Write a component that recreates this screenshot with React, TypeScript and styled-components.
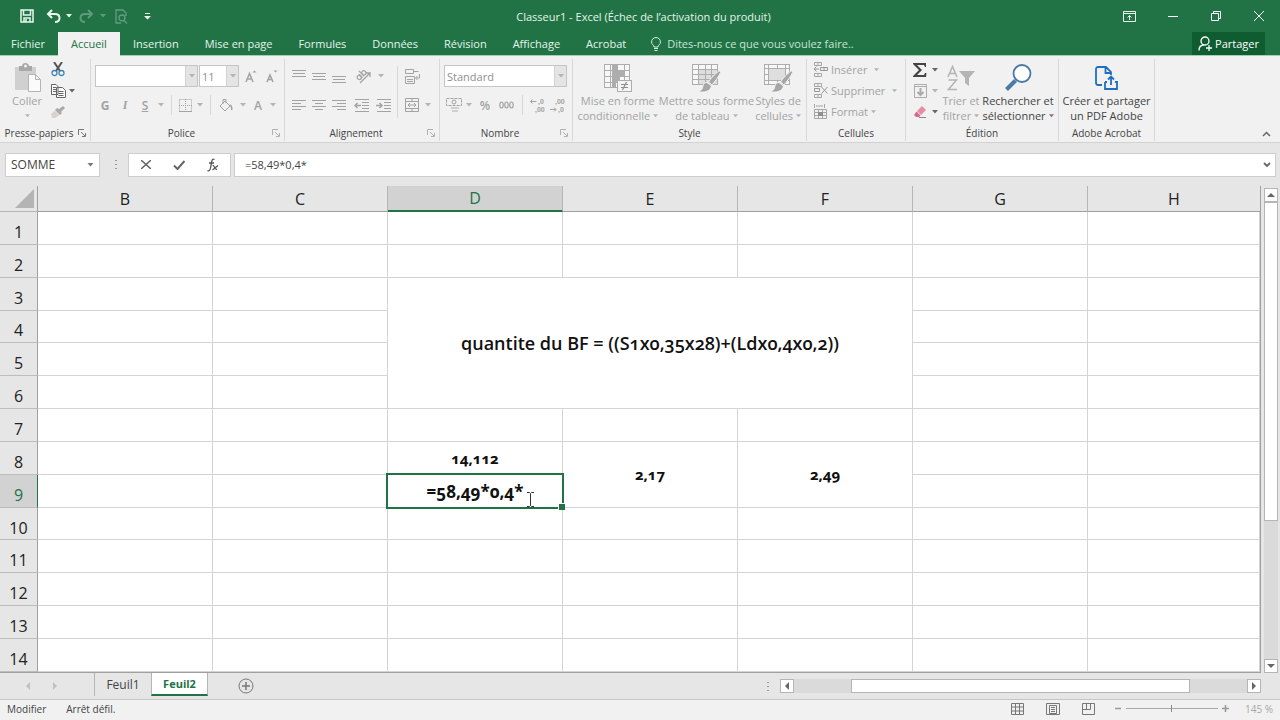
import React from 'react';
import styled, { createGlobalStyle, css } from 'styled-components';

const GREEN = '#217346';
const GREY = '#a3a3a3';
const INK = '#444444';

const GlobalStyle = createGlobalStyle`
  * { box-sizing: border-box; }
  body { margin: 0; }
  body, button, input, select { font-family: "Open Sans", "Noto Sans", sans-serif; }
  button { margin: 0; padding: 0; border: 0; background: none; color: inherit; font-size: 11px; }
  svg { display: block; flex: none; }
`;

const Window = styled.div`
  display: flex;
  flex-direction: column;
  height: 100vh;
  overflow: hidden;
  background: #e6e6e6;
  color: ${INK};
`;

/* ---------- title bar ---------- */

const TitleBar = styled.header`
  display: grid;
  grid-template-columns: 1fr auto 1fr;
  align-items: center;
  height: 32px;
  padding: 0 6px 0 13px;
  background: ${GREEN};
  color: #e4f3ea;
`;

const QuickAccess = styled.div`
  display: flex;
  align-items: center;
`;

const TitleButton = styled.button<{ $w: number; $faded?: boolean }>`
  display: flex;
  align-items: center;
  justify-content: center;
  width: ${p => p.$w}px;
  height: 24px;
  opacity: ${p => (p.$faded ? 0.3 : 1)};
`;

const Title = styled.h1`
  margin: 0;
  font-size: 11px;
  font-weight: 400;
`;

const WindowButtons = styled(QuickAccess)`
  justify-content: flex-end;
  gap: 31px;
  padding-right: 9px;
`;

/* ---------- ribbon tabs ---------- */

const TabRow = styled.nav`
  display: flex;
  align-items: stretch;
  height: 24px;
  padding-right: 15px;
  background: ${GREEN};
  border-bottom: 1px solid #9fd0b4;
`;

const RibbonTab = styled.button<{ $active?: boolean }>`
  padding: 0 13px;
  white-space: nowrap;
  color: #e4f3ea;
  &:first-child { padding-left: 11px; }
  ${p => p.$active && css`
    background: #f1f1f1;
    color: ${GREEN};
    margin-bottom: -1px;
    padding-bottom: 1px;
  `}
`;

const TellMe = styled.button`
  display: flex;
  align-items: center;
  gap: 6px;
  padding-left: 12px;
  color: #c5e5d2;
  white-space: nowrap;
`;

const ShareButton = styled.button`
  display: flex;
  align-items: center;
  gap: 3px;
  margin-left: auto;
  padding: 0 6px;
  background: #0e5c2f;
  color: #ffffff;
`;

/* ---------- ribbon ---------- */

const Ribbon = styled.section`
  display: flex;
  flex: none;
  height: 87px;
  padding: 3px 0 1px;
  background: #f1f1f1;
  border-bottom: 1px solid #d2d2d2;
`;

const GroupBox = styled.section<{ $w: number }>`
  display: flex;
  flex-direction: column;
  flex: none;
  width: ${p => p.$w}px;
  border-right: 1px solid #d8d8d8;
`;

const GroupBody = styled.div`
  display: flex;
  flex: 1;
  padding: 0 4px;
`;

const GroupFooter = styled.div`
  display: flex;
  align-items: center;
  height: 16px;
`;

const GroupName = styled.h2`
  flex: 1;
  margin: 0;
  font-size: 10px;
  font-weight: 400;
  text-align: center;
  white-space: nowrap;
`;

const LauncherButton = styled.button`
  width: 12px;
`;

const Stack = styled.div`
  display: flex;
  flex-direction: column;
  gap: 7px;
  padding-top: 6px;
`;

const TightStack = styled.div`
  display: grid;
  grid-auto-rows: 21px;
  align-content: start;
  align-items: center;
`;

const Row = styled.div`
  display: flex;
  align-items: center;
  height: 22px;
`;

const TightRow = styled(Row)`
  height: 21px;
`;

const Tool = styled.button<{ $w?: number }>`
  display: flex;
  align-items: center;
  justify-content: center;
  width: ${p => p.$w ?? 20}px;
  height: 20px;
  color: ${GREY};
  font-size: 12px;
`;

const Letter = styled.span<{ $kind: 'bold' | 'italic' | 'underline' | 'plain' }>`
  font-weight: ${p => (p.$kind === 'bold' ? 700 : 600)};
  font-style: ${p => (p.$kind === 'italic' ? 'italic' : 'normal')};
  font-family: ${p => (p.$kind === 'italic' ? '"Liberation Serif", serif' : 'inherit')};
  text-decoration: ${p => (p.$kind === 'underline' ? 'underline' : 'none')};
`;

const Divider = styled.span<{ $h?: number }>`
  align-self: center;
  width: 1px;
  height: ${p => p.$h ?? 20}px;
  margin: 0 4px;
  background: #d8d8d8;
`;

const Picker = styled.label<{ $w: number }>`
  display: flex;
  width: ${p => p.$w}px;
  height: 22px;
  border: 1px solid #c6c6c6;
  background: #ffffff;
  margin-right: 1px;
`;

const PickerSelect = styled.select`
  flex: 1;
  min-width: 0;
  padding: 0 2px;
  border: 0;
  background: none;
  appearance: none;
  color: #8f8f8f;
  opacity: 1;
  font-size: 11px;
`;

const PickerArrow = styled.span`
  display: flex;
  align-items: center;
  justify-content: center;
  width: 12px;
  background: #e4e4e4;
  border-left: 1px solid #d2d2d2;
`;

const BigTool = styled.button<{ $w: number; $enabled?: boolean }>`
  display: flex;
  flex-direction: column;
  align-items: center;
  width: ${p => p.$w}px;
  height: 65px;
  padding-top: 3px;
  color: ${p => (p.$enabled ? INK : GREY)};
  line-height: 15px;
  white-space: nowrap;
`;

const BigIcon = styled.span`
  display: flex;
  align-items: center;
  justify-content: center;
  height: 31px;
`;

const BigLine = styled.span`
  display: flex;
  align-items: center;
  gap: 3px;
  height: 15px;
`;

const TextTool = styled.button<{ $gap?: number }>`
  display: flex;
  align-items: center;
  gap: 3px;
  height: 21px;
  padding-left: 2px;
  color: ${GREY};
  white-space: nowrap;
  & > :last-child { margin-left: ${p => p.$gap ?? 0}px; }
`;

const CollapseButton = styled.button`
  align-self: flex-end;
  margin: 0 9px 4px auto;
`;

/* ---------- formula bar ---------- */

const FormulaBar = styled.section`
  display: flex;
  align-items: center;
  flex: none;
  height: 43px;
  padding: 0 4px 0 5px;
`;

const BarBox = styled.div<{ $w?: number }>`
  display: flex;
  align-items: center;
  ${p => (p.$w ? css`width: ${p.$w}px;` : css`flex: 1;`)}
  height: 24px;
  border: 1px solid #cdcdcd;
  background: #ffffff;
  margin-right: 3px;
  &:last-child { margin-right: 0; }
`;

const FormulaTools = styled(BarBox)`
  justify-content: space-around;
`;

const BarInput = styled.input<{ $pad: number; $size: number }>`
  flex: 1;
  min-width: 0;
  height: 20px;
  padding: 0 ${p => p.$pad}px;
  border: 0;
  outline: 0;
  background: none;
  color: ${INK};
  font-size: ${p => p.$size}px;
`;

const BarButton = styled.button<{ $w: number }>`
  display: flex;
  align-items: center;
  justify-content: center;
  width: ${p => p.$w}px;
  height: 20px;
`;

const Grip = styled.span`
  display: flex;
  flex-direction: column;
  align-items: center;
  justify-content: center;
  gap: 3px;
  width: 25px;
  & > i { width: 2px; height: 1px; background: #9a9a9a; }
`;

/* ---------- sheet ---------- */

const Workspace = styled.main`
  display: flex;
  flex: 1;
  min-height: 0;
`;

const Sheet = styled.div`
  flex: 1;
  min-width: 0;
  border-right: 1px solid #a0a0a0;
  border-bottom: 1px solid #a0a0a0;
`;

const Grid = styled.table`
  width: 100%;
  height: 100%;
  table-layout: fixed;
  border-collapse: separate;
  border-spacing: 0;
  background: #ffffff;
`;

const ColumnHead = styled.th<{ $selected?: boolean; $last?: boolean }>`
  height: 26px;
  padding: 0;
  font-size: 16px;
  line-height: 22px;
  font-weight: 400;
  color: ${p => (p.$selected ? GREEN : '#222222')};
  background: ${p => (p.$selected ? '#d2d2d2' : '#e6e6e6')};
  border-right: ${p => (p.$last ? 0 : 1)}px solid #b5b5b5;
  border-bottom: ${p => (p.$selected ? `2px solid ${GREEN}` : '1px solid #a0a0a0')};
`;

const Corner = styled.td`
  padding: 0;
  background: #e6e6e6;
  border-right: 1px solid #a0a0a0;
  border-bottom: 1px solid #b5b5b5;
  & > svg { margin: 0 3px 0 auto; }
`;

const RowHead = styled.th<{ $selected?: boolean }>`
  padding: 8px 0 0;
  font-size: 16px;
  line-height: 22px;
  font-weight: 400;
  color: ${p => (p.$selected ? GREEN : '#222222')};
  background: ${p => (p.$selected ? '#d2d2d2' : '#e6e6e6')};
  border-right: 1px solid ${p => (p.$selected ? GREEN : '#a0a0a0')};
  border-bottom: 1px solid #bdbdbd;
`;

const Cell = styled.td<{ $title?: boolean }>`
  position: relative;
  padding: 0;
  border-right: 1px solid #d4d4d4;
  border-bottom: 1px solid #d4d4d4;
  font-size: ${p => (p.$title ? 18 : 15)}px;
  line-height: 22px;
  font-weight: ${p => (p.$title ? 600 : 700)};
  font-variant-numeric: oldstyle-nums;
  text-align: center;
  color: #111111;
`;

const CellInput = styled.input`
  display: block;
  width: 100%;
  height: 26px;
  padding: 2px 0 0;
  border: 0;
  outline: 0;
  background: none;
  font-size: 17px;
  font-weight: 700;
  font-variant-numeric: oldstyle-nums;
  text-align: center;
  color: #111111;
`;

const Selection = styled.div`
  position: absolute;
  inset: -2px;
  border: 2px solid ${GREEN};
  pointer-events: none;
  z-index: 1;
  &::after {
    content: '';
    position: absolute;
    right: -3px;
    bottom: -3px;
    width: 6px;
    height: 6px;
    background: ${GREEN};
    border: solid #ffffff;
    border-width: 1px 0 0 1px;
  }
`;

const Pointer = styled.svg`
  position: absolute;
  left: 138px;
  top: 16px;
  z-index: 2;
`;

/* ---------- scroll bars ---------- */

const VerticalBar = styled.div`
  display: flex;
  flex-direction: column;
  width: 19px;
  padding: 2px 2px 0 3px;
`;

const ArrowButton = styled.button`
  display: flex;
  align-items: center;
  justify-content: center;
  width: 14px;
  height: 14px;
  flex: none;
  background: #ffffff;
  border: 1px solid #b5b5b5;
`;

const Track = styled.div<{ $dir: 'row' | 'column' }>`
  display: flex;
  flex: 1;
  flex-direction: ${p => p.$dir};
  background: #dadada;
`;

const Thumb = styled.div<{ $grow: number }>`
  flex: ${p => p.$grow};
  background: #ffffff;
  border: 1px solid #b5b5b5;
`;

const Space = styled.div<{ $grow: number }>`
  flex: ${p => p.$grow};
`;

/* ---------- sheet tabs and status ---------- */

const SheetBar = styled.section`
  display: flex;
  align-items: center;
  flex: none;
  height: 26px;
`;

const SheetNav = styled.div`
  display: flex;
  justify-content: space-around;
  width: 94px;
  padding: 0 26px 0 14px;
`;

const SheetTab = styled.button<{ $active?: boolean; $w: number }>`
  width: ${p => p.$w}px;
  height: 23px;
  align-self: flex-start;
  font-size: 12px;
  white-space: nowrap;
  border-left: 1px solid #b5b5b5;
  ${p => p.$active && css`
    background: #ffffff;
    color: ${GREEN};
    font-size: 11px;
    font-weight: 700;
    border-bottom: 2px solid ${GREEN};
    border-right: 1px solid #b5b5b5;
  `}
`;

const AddSheet = styled.button`
  margin-left: 30px;
`;

const HorizontalBar = styled.div`
  display: flex;
  flex: none;
  width: 41%;
  margin-left: auto;
  padding-right: 19px;
`;

const StatusBar = styled.footer`
  display: flex;
  align-items: center;
  flex: none;
  height: 21px;
  padding: 0 7px 3px;
  gap: 20px;
  font-size: 10px;
  background: #f1f1f1;
  border-top: 1px solid #c6c6c6;
`;

const ViewButtons = styled.div`
  display: flex;
  gap: 22px;
  margin-left: auto;
`;

const ZoomSlider = styled.div`
  display: flex;
  align-items: center;
  gap: 4px;
`;

const ZoomRange = styled.input`
  width: 92px;
  height: 9px;
  margin: 0;
  appearance: none;
  background: linear-gradient(#a8a8a8, #a8a8a8) center / 100% 1px no-repeat;
  &::-webkit-slider-thumb {
    appearance: none;
    width: 1px;
    height: 7px;
    background: #8a8a8a;
  }
`;

const ZoomValue = styled.output`
  margin-left: -4px;
  color: #a8a8a8;
`;

/* ---------- drawings ---------- */

const Caret = ({ c = '#b4b4b4', s = 6 }: { c?: string; s?: number }) => (
  <svg width={s} height="4" viewBox="0 0 6 4"><path d="M0 0h6L3 3.5z" fill={c} /></svg>
);

const Drop = ({ w = 12, c, label }: { w?: number; c?: string; label: string }) => (
  <Tool $w={w} aria-label={label}><Caret c={c} /></Tool>
);

const Lines = ({ xs, y0 = 2, step = 3, h = 14 }: { xs: [number, number][]; y0?: number; step?: number; h?: number }) => (
  <svg width="14" height={h} viewBox={`0 0 14 ${h}`} stroke="#a3a3a3">
    {xs.map(([a, b], i) => <path key={i} d={`M${a} ${y0 + i * step + 0.5}H${b}`} />)}
  </svg>
);

const Indent = ({ right }: { right?: boolean }) => (
  <svg width="16" height="14" viewBox="0 0 16 14" stroke="#a3a3a3" fill="none">
    <path d="M1 1.5h14M8 4.5h7M8 7.5h7M8 10.5h7M1 13.5h14" />
    <path strokeWidth="1.5" d={right ? 'M0 7.5h6M3.5 5l2.5 2.500L3.500 10' : 'M7 7.500H1M3.500 5L1 7.500 3.500 10'} />
  </svg>
);

const Launcher = ({ c = '#b0b0b0' }: { c?: string }) => (
  <svg width="8" height="8" viewBox="0 0 8 8" fill="none" stroke={c}>
    <path d="M.5 6V.5H6M3 3l4 4M7.500 4v3.500H4" />
  </svg>
);

const TableIcon = ({ kind }: { kind: 'rules' | 'table' | 'cell' }) => (
  <svg width="30" height="30" viewBox="0 0 30 30" fill="none" stroke="#adadad">
    <rect x="1.500" y="1.500" width="25" height={kind === 'rules' ? 23 : 20} fill="#f7f7f7" />
    {kind === 'rules' && <>
      <path d="M1 7.500h26M1 13.500h26M1 19.500h26M7.500 1v24M21.500 1v24" />
      <path fill="#adadad" stroke="none" d="M9 2h6v5H9zM9 8h12v5H9zM9 14h8v5H9zM9 20h4v5H9z" />
      <rect x="14.500" y="17.500" width="14" height="11" fill="#f4f4f4" />
      <path strokeWidth="1.200" stroke="#8f8f8f" d="M18 21.500h7M18 24.500h7M23.500 19l-4 8" />
    </>}
    {kind === 'table' && <>
      <path fill="#dedede" stroke="none" d="M8 7h18v14H8z" />
      <path d="M1 6.500h26M1 11.500h26M1 16.500h26M7.500 1v21M14.500 1v21M20.500 1v21" />
    </>}
    {kind === 'cell' && <>
      <path d="M1 5.500h26M1 17.500h26M5.500 1v21M22.500 1v21M14.500 1v4M14.500 18v4M1 11.500h4" />
      <path fill="#dedede" stroke="none" d="M6 6h16v11H6z" />
    </>}
    {kind !== 'rules' && <>
      <path fill="#a6a6a6" stroke="#f1f1f1" d="M28.500 7.500c-4 3-9 8-11 11.500l3.500 3C24 18.500 28 13 29.500 9.500z" />
      <path fill="#a6a6a6" stroke="#f1f1f1" d="M16 19.500c-3.500 0-4 3-4.500 5.500-.5 2-2.500 3-4.500 3.500 6 1.500 12.500 0 13.500-5.500z" />
    </>}
  </svg>
);

const MiniCells = ({ kind }: { kind: 'insert' | 'delete' | 'format' }) => (
  <svg width="15" height="15" viewBox="0 0 15 15" fill="none" stroke="#a6a6a6">
    {kind === 'format' ? <>
      <path d="M1.500 0v4M11.500 0v4M3 2h7M1.500 5.500h12v9h-12zM1 8.500h13M1 11.500h13M5.500 5v9M9.500 5v9" />
      <path fill="#8f8f8f" stroke="none" d="M5 8h5v4H5z" />
    </> : <>
      <path d="M1.500.5h7v3h-7zM5 .5v3M1.500 11.500h7v3h-7zM5 11.500v3" />
      {kind === 'insert'
        ? <path d="M7.500 5.500h7v3h-7zM11 5.500v3M6 7H1M3.500 4.500L1 7l2.500 2.500" stroke="#969696" />
        : <path d="M1.500 5.500h5v3h-5zM8.500 4l6 6.500M14.500 4l-6 6.500" stroke="#969696" />}
    </>}
  </svg>
);

const DecimalIcon = ({ more }: { more?: boolean }) => (
  <svg width="17" height="17" viewBox="0 0 17 17" fontFamily="Liberation Sans" fontSize="7" fontWeight="700" fill="#a3a3a3">
    <text x={more ? 9 : 6} y="7">{more ? ',0' : ',00'}</text>
    <text x={more ? 6 : 9} y="15">{more ? ',00' : ',0'}</text>
    <path fill="none" stroke="#a3a3a3" d={more ? 'M7.500 4.500H1.500M3.500 2.500l-2 2 2 2' : 'M1 12.500h6M5 10.500l2 2-2 2'} />
  </svg>
);

const Undo = () => (
  <svg width="15" height="14" viewBox="0 0 15 14" fill="none" stroke="#e9f6ee" strokeWidth="2">
    <path d="M2 5h7c3 0 4.500 1.800 4.500 4S12 13 9 13M6 1L2 5l4 4" />
  </svg>
);

const Redo = () => (
  <svg width="15" height="14" viewBox="0 0 15 14" fill="none" stroke="#e9f6ee" strokeWidth="2">
    <path d="M13 5H6C3 5 1.500 6.800 1.500 9S3 13 6 13M9 1l4 4-4 4" />
  </svg>
);

const Tri = ({ d, c = '#666' }: { d: string; c?: string }) => (
  <svg width="8" height="8" viewBox="0 0 8 8"><path d={d} fill={c} /></svg>
);
const LEFT = 'M6 0v8L2 4z';
const RIGHT = 'M2 0v8l4-4z';
const UP = 'M0 6h8L4 2z';
const DOWN = 'M0 2h8L4 6z';

/* ---------- sections ---------- */

const Group = ({ name, w, launcher, children }: { name: string; w: number; launcher?: string; children: React.ReactNode }) => (
  <GroupBox $w={w} aria-label={name}>
    <GroupBody>{children}</GroupBody>
    <GroupFooter>
      <GroupName>{name}</GroupName>
      {launcher && <LauncherButton aria-label={`Options ${name}`}><Launcher c={launcher} /></LauncherButton>}
    </GroupFooter>
  </GroupBox>
);

const Big = ({ w, icon, lines, drop, enabled }: { w: number; icon: React.ReactNode; lines: string[]; drop?: boolean; enabled?: boolean }) => (
  <BigTool $w={w} $enabled={enabled}>
    <BigIcon>{icon}</BigIcon>
    {lines.map((l, i) => (
      <BigLine key={i}>{l}{drop && i === lines.length - 1 && <Caret s={5} c={enabled ? '#777' : '#b4b4b4'} />}</BigLine>
    ))}
  </BigTool>
);

const PickerBox = ({ w, value, label }: { w: number; value: string; label: string }) => (
  <Picker $w={w}>
    <PickerSelect aria-label={label} disabled><option>{value}</option></PickerSelect>
    <PickerArrow><Caret /></PickerArrow>
  </Picker>
);

const TABS = ['Fichier', 'Accueil', 'Insertion', 'Mise en page', 'Formules', 'Données', 'Révision', 'Affichage', 'Acrobat'];
const COLUMNS = ['B', 'C', 'D', 'E', 'F', 'G', 'H'];
const ROWS = Array.from({ length: 14 }, (_, i) => i + 1);

const renderCell = (col: string, row: number) => {
  const inTitle = 'DEF'.includes(col) && row >= 3 && row <= 6;
  if (inTitle) {
    return col === 'D' && row === 3
      ? <Cell key={col} colSpan={3} rowSpan={4} $title>quantite du BF = ((S1x0,35x28)+(Ldx0,4x0,2))</Cell>
      : null;
  }
  if (row === 8 && col === 'D') return <Cell key={col}>14,112</Cell>;
  if (row === 8 && col === 'E') return <Cell key={col} rowSpan={2}>2,17</Cell>;
  if (row === 8 && col === 'F') return <Cell key={col} rowSpan={2}>2,49</Cell>;
  if (row === 9 && (col === 'E' || col === 'F')) return null;
  if (row === 9 && col === 'D') {
    return (
      <Cell key={col}>
        <CellInput aria-label="D9" defaultValue="=58,49*0,4*" />
        <Selection />
        <Pointer width="9" height="17" viewBox="0 0 9 17" fill="none" stroke="#333">
          <path d="M1 1.500h2.500l1 1 1-1H8M4.500 2.500v12M1 15.500h2.500l1-1 1 1H8" />
        </Pointer>
      </Cell>
    );
  }
  return <Cell key={col} />;
};

export default function App() {
  return (
    <Window>
      <GlobalStyle />
      <TitleBar>
        <QuickAccess>
          <TitleButton $w={28} aria-label="Enregistrer">
            <svg width="14" height="14" viewBox="0 0 14 14" fill="none" stroke="#e9f6ee" strokeWidth="1.500">
              <path d="M1 1h12v12H1zM3.500 1v5h7V1M4 13V9h6v4M6 10v3" />
            </svg>
          </TitleButton>
          <TitleButton $w={24} aria-label="Annuler"><Undo /></TitleButton>
          <TitleButton $w={8} aria-label="Historique d’annulation"><Caret c="#e9f6ee" /></TitleButton>
          <TitleButton $w={26} $faded aria-label="Rétablir"><Redo /></TitleButton>
          <TitleButton $w={8} $faded aria-label="Historique de rétablissement"><Caret c="#e9f6ee" /></TitleButton>
          <TitleButton $w={28} $faded aria-label="Aperçu">
            <svg width="13" height="15" viewBox="0 0 13 15" fill="none" stroke="#fff" strokeWidth="1.300">
              <path d="M6 14H1V1h7l3 3v3M9.500 12L12 14.500" /><circle cx="7" cy="9" r="3" />
            </svg>
          </TitleButton>
          <TitleButton $w={24} aria-label="Personnaliser">
            <svg width="7" height="7" viewBox="0 0 7 7"><path fill="#e9f6ee" d="M1 0h5v1H1zM0 3h7L3.500 6.500z" /></svg>
          </TitleButton>
        </QuickAccess>
        <Title>Classeur1 - Excel (Échec de l’activation du produit)</Title>
        <WindowButtons>
          <TitleButton $w={14} aria-label="Options d’affichage du ruban">
            <svg width="13" height="11" viewBox="0 0 13 11" fill="none" stroke="#e9f6ee"><path d="M.5.5h12v10H.5zM.5 2.500h12M6.500 9V4.500M4.500 6.500l2-2 2 2" /></svg>
          </TitleButton>
          <TitleButton $w={12} aria-label="Réduire">
            <svg width="10" height="10" viewBox="0 0 10 10" stroke="#fff"><path d="M0 5.500h10" /></svg>
          </TitleButton>
          <TitleButton $w={12} aria-label="Restaurer">
            <svg width="10" height="10" viewBox="0 0 10 10" fill="none" stroke="#fff"><path d="M.5 2.500h7v7h-7zM2.500 2.500v-2h7v7h-2" /></svg>
          </TitleButton>
          <TitleButton $w={12} aria-label="Fermer">
            <svg width="10" height="10" viewBox="0 0 10 10" stroke="#fff"><path d="M0 0l10 10M10 0L0 10" /></svg>
          </TitleButton>
        </WindowButtons>
      </TitleBar>

      <TabRow>
        {TABS.map(t => <RibbonTab key={t} $active={t === 'Accueil'}>{t}</RibbonTab>)}
        <TellMe>
          <svg width="10" height="14" viewBox="0 0 10 14" fill="none" stroke="#d5eedf">
            <path d="M3 10C3 8 .5 7.500.5 5a4.500 4.500 0 019 0C9.500 7.500 7 8 7 10zM3 11.500h4M3.500 13.500h3" />
          </svg>
          Dites-nous ce que vous voulez faire..
        </TellMe>
        <ShareButton>
          <svg width="14" height="15" viewBox="0 0 14 15" fill="none" stroke="#fff" strokeWidth="1.300">
            <circle cx="7" cy="5" r="4" /><path d="M1 14.500c0-3.500 2-5.500 5-5.500M11 9v6M8 12h6" />
          </svg>
          Partager
        </ShareButton>
      </TabRow>

      <Ribbon>
        <Group name="Presse-papiers" w={91} launcher="#777">
          <Big w={46} lines={['Coller', '']} drop icon={
            <svg width="28" height="30" viewBox="0 0 28 30">
              <path fill="#d0d0d0" d="M2 4h21v23H2z" /><path fill="#a8a8a8" d="M6 3h3c0-4 7-4 7 0h3v5H6z" /><circle cx="12.500" cy="3" r="1.500" fill="#f1f1f1" />
              <path fill="#fbfbfb" stroke="#b4b4b4" d="M15.500 11.500h7l5 5v12h-12zM22.500 11.500v5h5" />
            </svg>} />
          <TightStack>
            <Tool $w={16} aria-label="Couper">
              <svg width="14" height="15" viewBox="0 0 14 15" fill="none">
                <path stroke="#555" strokeWidth="2" d="M3 0l6 9M11 0L5 9" /><circle cx="3.500" cy="11" r="2.500" stroke="#3f86b8" strokeWidth="1.300" /><circle cx="10.500" cy="11" r="2.500" stroke="#3f86b8" strokeWidth="1.300" />
              </svg>
            </Tool>
            <TightRow>
              <Tool $w={16} aria-label="Copier">
                <svg width="15" height="14" viewBox="0 0 15 14" fill="#fafafa" stroke="#666">
                  <path d="M.5.5H5l2 2v8H.5zM2 3.500h3M2 5.500h3M2 7.500h3M5.500 3.500h6l3 3v7h-9zM7.500 7.500h5M7.500 9.500h5M7.500 11.500h5" />
                </svg>
              </Tool>
              <Drop c="#666" label="Options de copie" />
            </TightRow>
            <Tool $w={16} aria-label="Reproduire la mise en forme">
              <svg width="14" height="12" viewBox="0 0 14 12"><path fill="#aaa" d="M12 0l2 2-4 4 1 1-2 2-5-5 2-2 2 1z" /><path fill="#d9d3cc" d="M4 4.500L8.500 9 4 12H1L0 8z" /></svg>
            </Tool>
          </TightStack>
        </Group>

        <Group name="Police" w={194} launcher="#b0b0b0">
          <Stack>
            <Row>
              <PickerBox w={103} value="" label="Police" />
              <PickerBox w={40} value="11" label="Taille de police" />
              <Tool $w={22} aria-label="Augmenter la taille">
                <svg width="12" height="14" viewBox="0 0 12 14" fill="none" stroke="#a3a3a3" strokeWidth="1.500"><path d="M1 13L4.500 4.500 8 13M2.500 10h4" /><path d="M7.500 3.500h4l-2-2z" fill="#a3a3a3" stroke="none" /></svg>
              </Tool>
              <Tool $w={20} aria-label="Réduire la taille">
                <svg width="12" height="14" viewBox="0 0 12 14" fill="none" stroke="#a3a3a3" strokeWidth="1.500"><path d="M1 13l3-7 3 7M2.500 10.500h3" /><path d="M7.500 1.500h4l-2 2z" fill="#a3a3a3" stroke="none" /></svg>
              </Tool>
            </Row>
            <Row>
              <Tool aria-label="Gras"><Letter $kind="bold">G</Letter></Tool>
              <Tool aria-label="Italique"><Letter $kind="italic">I</Letter></Tool>
              <Tool aria-label="Souligné"><Letter $kind="underline">S</Letter></Tool>
              <Drop label="Options de soulignement" />
              <Divider />
              <Tool $w={18} aria-label="Bordures">
                <svg width="13" height="13" viewBox="0 0 13 13" fill="none" stroke="#a3a3a3"><path strokeDasharray="1 1" d="M.5.5h12v12M.5.5v12M6.500 0v12M0 6.500h13" /><path d="M0 12.500h13" /></svg>
              </Tool>
              <Drop label="Options de bordure" />
              <Divider />
              <Tool $w={22} aria-label="Remplissage">
                <svg width="14" height="14" viewBox="0 0 14 14" fill="none" stroke="#a3a3a3"><path d="M1 8l5-5 5 5-5 5zM4 6V1.500h3V5" /><path d="M11 7c2 1 2 3 1.500 5" strokeWidth="1.500" /></svg>
              </Tool>
              <Drop label="Couleur de remplissage" />
              <Tool $w={18} aria-label="Couleur de police"><Letter $kind="plain">A</Letter></Tool>
              <Drop label="Choix de couleur" />
            </Row>
          </Stack>
        </Group>

        <Group name="Alignement" w={155} launcher="#b0b0b0">
          <Stack>
            <Row>
              <Tool aria-label="Aligner en haut"><Lines xs={[[0, 14], [1, 13], [0, 14]]} y0={1} /></Tool>
              <Tool aria-label="Aligner au centre"><Lines xs={[[0, 14], [1, 13], [0, 14]]} y0={4} /></Tool>
              <Tool aria-label="Aligner en bas"><Lines xs={[[0, 14], [1, 13], [0, 14]]} y0={7} /></Tool>
              <Tool $w={28} aria-label="Orientation">
                <svg width="20" height="20" viewBox="0 0 20 20" stroke="#a3a3a3" fill="none">
                  <path d="M7 17L17 7M13 7h4v4" strokeWidth="1.300" />
                  <g strokeWidth="1.200" transform="rotate(-45 8 9)">
                    <ellipse cx="5" cy="9.500" rx="2" ry="2.200" /><path d="M7.200 7v5" />
                    <ellipse cx="11.500" cy="9.500" rx="2" ry="2.200" /><path d="M9.400 4.500V12" />
                  </g>
                </svg>
              </Tool>
              <Drop w={8} label="Options d’orientation" />
            </Row>
            <Row>
              <Tool aria-label="Aligner à gauche"><Lines xs={[[0, 14], [0, 9], [0, 14], [0, 9]]} /></Tool>
              <Tool aria-label="Centrer"><Lines xs={[[0, 14], [3, 11], [0, 14], [3, 11]]} /></Tool>
              <Tool aria-label="Aligner à droite"><Lines xs={[[0, 14], [5, 14], [0, 14], [5, 14]]} /></Tool>
              <Tool $w={26} aria-label="Diminuer le retrait"><Indent /></Tool>
              <Tool $w={18} aria-label="Augmenter le retrait"><Indent right /></Tool>
            </Row>
          </Stack>
          <Divider $h={52} />
          <Stack>
            <Row>
              <Tool aria-label="Renvoyer à la ligne">
                <svg width="15" height="15" viewBox="0 0 15 15" stroke="#a3a3a3" fill="none"><path d="M.5.5h8v4h-8zM8.500 2.500h5M.5 7.500h9v7h-9zM2 10.500h6M2 12.500h6M14.500 5v4H11M12.500 7L10.500 9l2 2" /></svg>
              </Tool>
            </Row>
            <Row>
              <Tool aria-label="Fusionner et centrer">
                <svg width="14" height="14" viewBox="0 0 14 14" stroke="#a3a3a3" fill="none"><path d="M.5.5h13v13H.5zM.5 3.500h13M.5 10.500h13M7 .5v3M7 10.500v3M3 7h8M5 5L3 7l2 2M9 5l2 2-2 2" /></svg>
              </Tool>
              <Drop label="Options de fusion" />
            </Row>
          </Stack>
        </Group>

        <Group name="Nombre" w={133} launcher="#b0b0b0">
          <Stack>
            <Row><PickerBox w={123} value="Standard" label="Format de nombre" /></Row>
            <Row>
              <Tool aria-label="Format comptabilité">
                <svg width="16" height="14" viewBox="0 0 16 14" fill="none" stroke="#a3a3a3"><path d="M.5.5h15v7H.5z" strokeDasharray="3 1" /><circle cx="8" cy="4" r="2" /><path stroke="#d0d0d0" strokeWidth="2" d="M5 10h8M6 13h6" /></svg>
              </Tool>
              <Drop w={10} label="Devises" />
              <Tool $w={22} aria-label="Pourcentage"><Letter $kind="plain">%</Letter></Tool>
              <Tool $w={22} aria-label="Séparateur de milliers">
                <svg width="16" height="10" viewBox="0 0 16 10" fill="none" stroke="#a3a3a3" strokeWidth="1.200">
                  <ellipse cx="2.500" cy="5" rx="1.700" ry="3" /><ellipse cx="7.500" cy="5" rx="1.700" ry="3" /><ellipse cx="12.500" cy="5" rx="1.700" ry="3" />
                </svg>
              </Tool>
              <Divider />
              <Tool aria-label="Ajouter une décimale"><DecimalIcon more /></Tool>
              <Tool aria-label="Réduire les décimales"><DecimalIcon /></Tool>
            </Row>
          </Stack>
        </Group>

        <Group name="Style" w={234}>
          <Big w={82} drop lines={['Mise en forme', 'conditionnelle']} icon={<TableIcon kind="rules" />} />
          <Big w={96} drop lines={['Mettre sous forme', 'de tableau']} icon={<TableIcon kind="table" />} />
          <Big w={48} drop lines={['Styles de', 'cellules']} icon={<TableIcon kind="cell" />} />
        </Group>

        <Group name="Cellules" w={99}>
          <TightStack>
            <TextTool $gap={4}><MiniCells kind="insert" />Insérer<Caret s={5} /></TextTool>
            <TextTool $gap={4}><MiniCells kind="delete" />Supprimer<Caret s={5} /></TextTool>
            <TextTool><MiniCells kind="format" />Format<Caret s={5} /></TextTool>
          </TightStack>
        </Group>

        <Group name="Édition" w={153}>
          <TightStack>
            <TightRow>
              <Tool aria-label="Somme automatique"><svg width="14" height="14" viewBox="0 0 14 14"><path fill="#444" d="M0 0h13v4h-1l-1-2H4l5 5-5 5h7l1-2h1.500L13 14H0v-1l6-6-6-6z" /></svg></Tool>
              <Drop w={10} c="#666" label="Options de somme" />
            </TightRow>
            <TightRow>
              <Tool aria-label="Remplissage"><svg width="13" height="14" viewBox="0 0 13 14" fill="none" stroke="#ababab"><path d="M.5.5h12v13H.5zM.5 2.500h12" /><path strokeWidth="2" d="M6.500 4v7M3.500 8l3 3 3-3" /></svg></Tool>
              <Drop w={10} label="Options de remplissage" />
            </TightRow>
            <TightRow>
              <Tool aria-label="Effacer"><svg width="13" height="12" viewBox="0 0 13 12"><path fill="#e58ea3" d="M8 0l4 4-5 5-4-4z" /><path fill="#d9688a" d="M2.500 5.500l4 4L5 11H2L0 9z" /><path stroke="#888" d="M5 11.500h7" /></svg></Tool>
              <Drop w={10} c="#666" label="Options d’effacement" />
            </TightRow>
          </TightStack>
          <Big w={42} drop lines={['Trier et', 'filtrer']} icon={
            <svg width="28" height="26" viewBox="0 0 28 26" fill="none" stroke="#b4b4b4" strokeWidth="1.500"><path d="M1 12L5.500 1.500 10 12M2.500 8.500h6M1.500 15h8L1.500 24.500H10" /><path fill="#b4b4b4" stroke="none" d="M12 6h16l-6 7v8l-4-3v-5z" /></svg>} />
          <Big w={72} drop enabled lines={['Rechercher et', 'sélectionner']} icon={
            <svg width="27" height="27" viewBox="0 0 27 27" fill="none"><path stroke="#4a7ba8" strokeWidth="4" d="M1.500 25.500l9-9" /><circle cx="17" cy="9.500" r="8.500" fill="#fdfdfd" stroke="#4a7ba8" strokeWidth="1.800" /></svg>} />
        </Group>

        <Group name="Adobe Acrobat" w={96}>
          <Big w={87} enabled lines={['Créer et partager', 'un PDF Adobe']} icon={
            <svg width="23" height="24" viewBox="0 0 23 24" fill="none" stroke="#1f6fc2" strokeWidth="1.800"><path d="M7 19H3a2 2 0 01-2-2V3a2 2 0 012-2h8l5 5v3M10.500 1v6H16M10 16v7h12v-7h-2M12 16h-2M16 19v-8M13 13.500l3-3 3 3" /></svg>} />
        </Group>
        <CollapseButton aria-label="Réduire le ruban">
          <svg width="9" height="6" viewBox="0 0 9 6" fill="none" stroke="#666" strokeWidth="1.500"><path d="M1 5l3.500-3.500L8 5" /></svg>
        </CollapseButton>
      </Ribbon>

      <FormulaBar>
        <BarBox $w={95}>
          <BarInput aria-label="Zone Nom" defaultValue="SOMME" $pad={5} $size={12} />
          <BarButton $w={18} aria-label="Liste des noms"><Caret c="#777" s={7} /></BarButton>
        </BarBox>
        <Grip><i /><i /><i /></Grip>
        <FormulaTools $w={103}>
          <BarButton $w={20} aria-label="Annuler la saisie"><svg width="10" height="9" viewBox="0 0 10 9" stroke="#666" strokeWidth="1.500"><path d="M0 0l10 9M10 0L0 9" /></svg></BarButton>
          <BarButton $w={20} aria-label="Valider"><svg width="12" height="10" viewBox="0 0 12 10" fill="none" stroke="#666" strokeWidth="2"><path d="M1 5.500L4.500 9 11.500 1" /></svg></BarButton>
          <BarButton $w={20} aria-label="Insérer une fonction">
            <svg width="12" height="14" viewBox="0 0 12 14" fill="none" stroke="#555" strokeWidth="1.300">
              <path d="M7.500 1.500C5.500.5 5 2 4.500 4.500L3.500 10C3 12.500 2 13.500.5 12.500M2 5h5" /><path d="M5.500 7.500c2-.5 2 4 4.500 4M11 7.500L5.500 12" />
            </svg>
          </BarButton>
        </FormulaTools>
        <BarBox>
          <BarInput aria-label="Barre de formule" defaultValue="=58,49*0,4*" $pad={10} $size={11} />
          <BarButton $w={16} aria-label="Développer"><svg width="8" height="6" viewBox="0 0 8 6" fill="none" stroke="#666" strokeWidth="1.800"><path d="M1 1l3 3 3-3" /></svg></BarButton>
        </BarBox>
      </FormulaBar>

      <Workspace>
        <Sheet>
          <Grid>
            <colgroup>
              <col width="38" />
              {COLUMNS.map(c => <col key={c} width={c === 'H' ? undefined : 175} />)}
            </colgroup>
            <thead>
              <tr>
                <Corner><svg width="19" height="19" viewBox="0 0 19 19"><path d="M19 0v19H0z" fill="#b4b4b4" /></svg></Corner>
                {COLUMNS.map(c => <ColumnHead key={c} scope="col" $selected={c === 'D'} $last={c === 'H'}>{c}</ColumnHead>)}
              </tr>
            </thead>
            <tbody>
              {ROWS.map(r => (
                <tr key={r}>
                  <RowHead scope="row" $selected={r === 9}>{r}</RowHead>
                  {COLUMNS.map(c => renderCell(c, r))}
                </tr>
              ))}
            </tbody>
          </Grid>
        </Sheet>
        <VerticalBar>
          <ArrowButton aria-label="Défiler vers le haut"><Tri d={UP} /></ArrowButton>
          <Track $dir="column"><Thumb $grow={319} /><Space $grow={139} /></Track>
          <ArrowButton aria-label="Défiler vers le bas"><Tri d={DOWN} /></ArrowButton>
        </VerticalBar>
      </Workspace>

      <SheetBar>
        <SheetNav>
          <button aria-label="Feuille précédente"><Tri d={LEFT} c="#c2c2c2" /></button>
          <button aria-label="Feuille suivante"><Tri d={RIGHT} c="#c2c2c2" /></button>
        </SheetNav>
        <SheetTab $w={57}>Feuil1</SheetTab>
        <SheetTab $w={57} $active>Feuil2</SheetTab>
        <AddSheet aria-label="Nouvelle feuille">
          <svg width="16" height="16" viewBox="0 0 16 16" fill="none" stroke="#777"><circle cx="8" cy="8" r="7" /><path strokeWidth="1.500" d="M4 8h8M8 4v8" /></svg>
        </AddSheet>
        <HorizontalBar>
          <Grip><i /><i /><i /></Grip>
          <ArrowButton aria-label="Défiler à gauche"><Tri d={LEFT} /></ArrowButton>
          <Track $dir="row"><Space $grow={57} /><Thumb $grow={336} /><Space $grow={57} /></Track>
          <ArrowButton aria-label="Défiler à droite"><Tri d={RIGHT} /></ArrowButton>
        </HorizontalBar>
      </SheetBar>

      <StatusBar>
        <span>Modifier</span>
        <span>Arrêt défil.</span>
        <ViewButtons>
          <button aria-label="Normal"><svg width="13" height="12" viewBox="0 0 13 12" fill="none" stroke="#777"><path d="M.5.5h12v11H.5zM.5 4h12M.5 8h12M4.500 0v12M8.500 0v12" /></svg></button>
          <button aria-label="Mise en page"><svg width="14" height="12" viewBox="0 0 14 12" fill="none" stroke="#777"><path d="M.5.5h13v11H.5zM3.500 2.500h7v8h-7zM5 4.500h4M5 6.500h4M5 8.500h4" /></svg></button>
          <button aria-label="Sauts de page"><svg width="13" height="12" viewBox="0 0 13 12" fill="none" stroke="#777"><path d="M.5.5h12v11H.5zM.5 6.500h8V.5M4.500 .5v6" /></svg></button>
        </ViewButtons>
        <ZoomSlider>
          <button aria-label="Zoom arrière"><svg width="7" height="7" viewBox="0 0 7 7" stroke="#999" strokeWidth="1.500"><path d="M0 3.500h6" /></svg></button>
          <ZoomRange type="range" min="10" max="400" defaultValue="205" aria-label="Zoom" />
          <button aria-label="Zoom avant"><svg width="7" height="7" viewBox="0 0 7 7" stroke="#999" strokeWidth="1.500"><path d="M0 3.500h7M3.500 0v7" /></svg></button>
        </ZoomSlider>
        <ZoomValue>145 %</ZoomValue>
      </StatusBar>
    </Window>
  );
}
